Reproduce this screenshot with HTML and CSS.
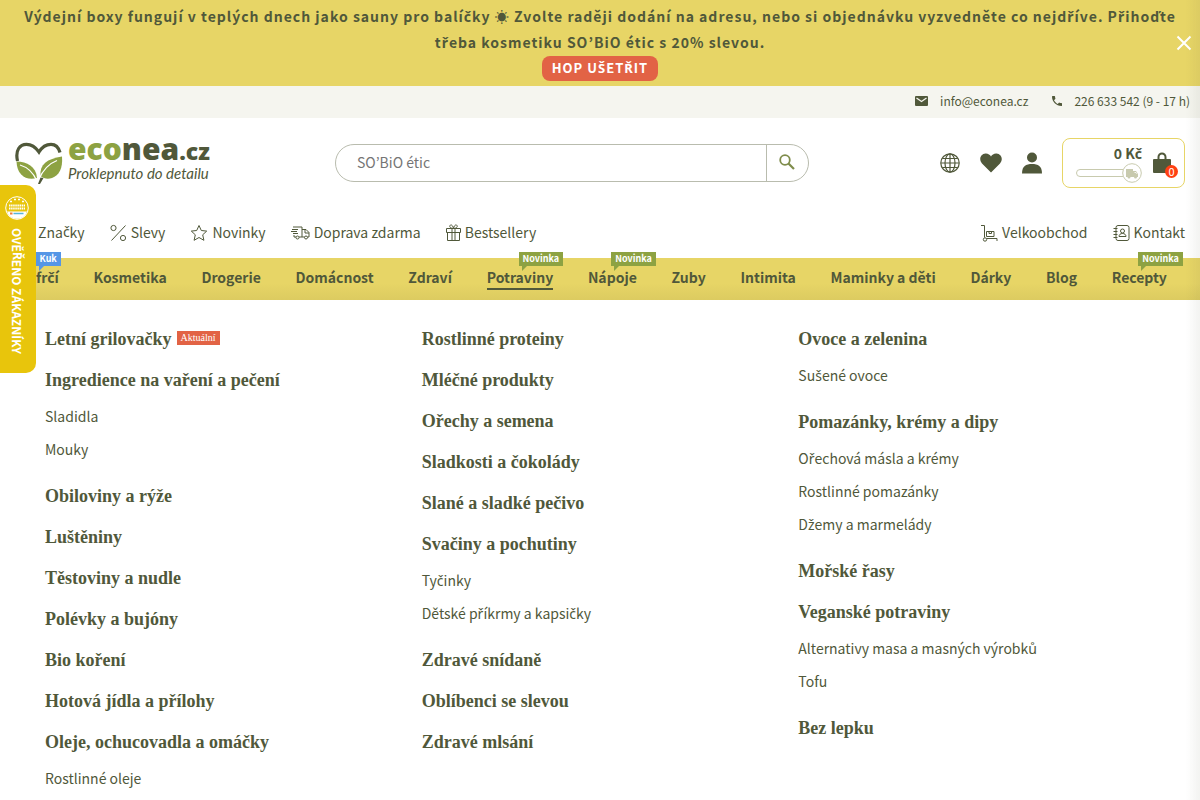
FILE: index.html
```html
<!DOCTYPE html>
<html lang="cs">
<head>
<meta charset="utf-8">
<meta name="viewport" content="width=device-width, initial-scale=1">
<title>Econea.cz – Potraviny</title>
<link rel="stylesheet" href="styles.css">
<script src="carons.js" defer></script>
</head>
<body>
<div class="promo">
  <p class="promo-text">Výdejní boxy fungují v teplých dnech jako sauny pro balíčky ☀ Zvolte raději dodání na adresu, nebo si objednávku vyzvedněte co nejdříve. Přihoďte třeba kosmetiku SO’BiO étic s 20% slevou.</p>
  <a class="promo-cta" href="#">HOP UŠETŘIT</a>
  <button class="promo-close" type="button" aria-label="Zavřít"><svg width="16" height="16" viewBox="0 0 16 16"><path d="M1.500 1.500l13 13M14.500 1.500l-13 13" stroke="#fff" stroke-width="2" fill="none"/></svg></button>
</div>
<div class="contactbar">
  <a href="#"><svg width="13" height="10" viewBox="0 0 13 10"><rect width="13" height="10" rx="1" fill="#50583a"/><path d="M1.500 2l5 3.500 5-3.500" stroke="#f5f5ef" stroke-width="1.300" fill="none"/></svg>info@econea.cz</a>
  <a href="#"><svg width="10" height="10" viewBox="3 3 18 18"><path fill="#50583a" d="M6.600 10.800c1.400 2.800 3.800 5.100 6.600 6.600l2.200-2.200c.3-.3.700-.4 1-.2 1.100.4 2.300.6 3.600.6.600 0 1 .4 1 1V20c0 .6-.4 1-1 1C10.600 21 3 13.400 3 4c0-.6.500-1 1-1h3.500c.6 0 1 .4 1 1 0 1.300.2 2.500.6 3.600.1.300 0 .7-.2 1z"/></svg>226 633 542 (9 - 17 h)</a>
</div>
<header class="header">
  <a class="logo" href="#">
    <svg width="48" height="42" viewBox="0 0 48 42">
      <path d="M2.500 19C0 8 5 2.300 11.500 2.300c5.500 0 9 2.700 12.500 7.700 3-5 7-7.700 12-7.700 4 0 7.500 2.700 9 8.200" fill="none" stroke="#50583a" stroke-width="3.200"/>
      <path d="M47 14.500c1 12-3 19-10 21.500-4.500 1.500-8.500.5-11.500-2C24.500 22 32 17 47 14.500z" fill="#8da242"/>
      <path d="M1.500 19.500C12 20 21 24 22 36 11 39 2 33 1.500 19.500z" fill="#8da242"/>
      <path d="M5 23c7 2 13 7 17 16M42 18.500c-8 3-14 9-18.500 19.500" fill="none" stroke="#fff" stroke-width="1.300"/>
      <path d="M25.500 35.500l3 .500-3.500 6h-2z" fill="#50583a"/>
    </svg>
    <span class="logo-words"><span class="logo-name"><b>eco</b>nea<small>.cz</small></span><span class="logo-claim">Proklepnuto do detailu</span></span>
  </a>
  <form class="search">
    <input type="text" placeholder="SO’BiO étic" aria-label="Hledat">
    <button type="button" aria-label="Hledat"><svg width="16" height="16" viewBox="0 0 16 16" fill="none" stroke="#7f8c4b"><circle cx="6" cy="6" r="4.800" stroke-width="1.800"/><path d="M9.500 9.500l5.500 5.500" stroke-width="2.200"/></svg></button>
  </form>
  <div class="tools">
    <a href="#" aria-label="Jazyk"><svg width="20" height="20" viewBox="0 0 20 20" fill="none" stroke="#50583a" stroke-width="1.200"><circle cx="10" cy="10" r="9.200"/><ellipse cx="10" cy="10" rx="5" ry="9.200"/><path d="M10 1v18M1 10h18M2.500 5.500h15M2.500 14.500h15"/></svg></a>
    <a href="#" aria-label="Oblíbené"><svg width="22" height="20" viewBox="0 0 22 20"><path fill="#50583a" d="M11 19.500L2 10.500C-1.500 6.500.500 1 5.500.500 8 .300 10 1.800 11 3.500 12 1.800 14 .300 16.500.500c5 .500 7 6 3.500 10z"/></svg></a>
    <a href="#" aria-label="Účet"><svg width="20" height="22" viewBox="0 0 20 22" fill="#50583a"><circle cx="10" cy="5.500" r="5"/><path d="M0 21.500C0 14 4 12 10 12s10 2 10 9.500z"/></svg></a>
    <a class="cart" href="#">
      <span class="cart-sum"><strong>0 Kč</strong>
        <svg width="66" height="20" viewBox="0 0 66 20" fill="#fff" stroke="#c8caae"><rect x=".5" y="6.500" width="58" height="7" rx="3.500"/><circle cx="56" cy="10" r="9.300"/><path fill="#c8caae" stroke="none" d="M50 6h7v2h3l2 3v3h-1a1.500 1.500 0 0 1-3 0h-3.500a1.500 1.500 0 0 1-3 0H50z"/><path stroke="#fff" d="M58.500 9.500h1.500l.8 1.300" fill="none" stroke-width=".8"/></svg></span>
      <span class="cart-bag"><svg width="18" height="22" viewBox="0 0 18 22"><path d="M5.500 9V5a3.500 3.500 0 0 1 7 0V9" fill="none" stroke="#50583a" stroke-width="2"/><rect y="7" width="18" height="14" rx="1" fill="#50583a"/></svg><span class="cart-count">0</span></span>
    </a>
  </div>
</header>
<nav class="quick">
  <a href="#">Značky</a>
  <a href="#"><svg width="17" height="18" viewBox="0 0 17 18"><circle cx="3.500" cy="4" r="2.600"/><circle cx="13" cy="14" r="2.600"/><path d="M15.500 1.500l-14 15"/></svg>Slevy</a>
  <a href="#"><svg width="18" height="18" viewBox="0 0 18 18"><path d="M9 1.500l2.300 5 5.400.6-4 3.700 1.200 5.500L9 13.500l-4.900 2.800 1.200-5.500-4-3.700 5.400-.6z"/></svg>Novinky</a>
  <a href="#"><svg width="19" height="18" viewBox="0 0 19 18"><path d="M2 3h9v10H8M5 13H3v-2M11 5.500h4l3 3V13h-1.500M13.500 13H11M14 5.500v3.500h4M1 5.500h6M0 7.500h6M2 9.500h5"/><circle cx="6.500" cy="13.500" r="1.500"/><circle cx="15" cy="13.500" r="1.500"/></svg>Doprava zdarma</a>
  <a href="#"><svg width="15" height="18" viewBox="0 0 15 18"><path d="M.5 4.500h14v4H.5zM1.500 8.500v8h12v-8M6 4.500v12M9 4.500v12M7.500 4.500C5 4.500 3 3 4 1.500s3 0 3.500 3C8 1.500 10 0 11 1.500s-1 3-3.500 3z"/></svg>Bestsellery</a>
  <a class="push" href="#"><svg width="17" height="18" viewBox="0 0 17 18"><path d="M0 1.500h3.500v12M5.500 14.500H16V17M5.500 7.500h7.500v5H5.500zM8 7.500v2h2.500v-2"/><circle cx="4" cy="15.500" r="1.700"/></svg>Velkoobchod</a>
  <a href="#"><svg width="17" height="18" viewBox="0 0 17 18"><rect x="3" y="1.500" width="13" height="15" rx="2"/><path d="M.5 4.500h4M.5 7.500h4M.5 10.500h4M.5 13.500h4M6 12.500c0-2 1.500-3 3.500-3s3.500 1 3.500 3z"/><circle cx="9.500" cy="7" r="2"/></svg>Kontakt</a>
</nav>
<nav class="mainnav">
  <a href="#">frčí<span class="flag flag-blue">Kuk</span></a>
  <a href="#">Kosmetika</a>
  <a href="#">Drogerie</a>
  <a href="#">Domácnost</a>
  <a href="#">Zdraví</a>
  <a class="active" href="#">Potraviny<span class="flag">Novinka</span></a>
  <a href="#">Nápoje<span class="flag">Novinka</span></a>
  <a href="#">Zuby</a>
  <a href="#">Intimita</a>
  <a href="#">Maminky a děti</a>
  <a href="#">Dárky</a>
  <a href="#">Blog</a>
  <a href="#">Recepty<span class="flag">Novinka</span></a>
</nav>
<main class="mega">
  <ul class="col">
    <li><a class="head" href="#">Letní grilovačky<span class="tag">Aktuální</span></a></li>
    <li><a class="head" href="#">Ingredience na vaření a pečení</a><ul class="sub"><li><a href="#">Sladidla</a></li><li><a href="#">Mouky</a></li></ul></li>
    <li><a class="head" href="#">Obiloviny a rýže</a></li>
    <li><a class="head" href="#">Luštěniny</a></li>
    <li><a class="head" href="#">Těstoviny a nudle</a></li>
    <li><a class="head" href="#">Polévky a bujóny</a></li>
    <li><a class="head" href="#">Bio koření</a></li>
    <li><a class="head" href="#">Hotová jídla a přílohy</a></li>
    <li><a class="head" href="#">Oleje, ochucovadla a omáčky</a><ul class="sub"><li><a href="#">Rostlinné oleje</a></li></ul></li>
  </ul>
  <ul class="col">
    <li><a class="head" href="#">Rostlinné proteiny</a></li>
    <li><a class="head" href="#">Mléčné produkty</a></li>
    <li><a class="head" href="#">Ořechy a semena</a></li>
    <li><a class="head" href="#">Sladkosti a čokolády</a></li>
    <li><a class="head" href="#">Slané a sladké pečivo</a></li>
    <li><a class="head" href="#">Svačiny a pochutiny</a><ul class="sub"><li><a href="#">Tyčinky</a></li><li><a href="#">Dětské příkrmy a kapsičky</a></li></ul></li>
    <li><a class="head" href="#">Zdravé snídaně</a></li>
    <li><a class="head" href="#">Oblíbenci se slevou</a></li>
    <li><a class="head" href="#">Zdravé mlsání</a></li>
  </ul>
  <ul class="col">
    <li><a class="head" href="#">Ovoce a zelenina</a><ul class="sub"><li><a href="#">Sušené ovoce</a></li></ul></li>
    <li><a class="head" href="#">Pomazánky, krémy a dipy</a><ul class="sub"><li><a href="#">Ořechová másla a krémy</a></li><li><a href="#">Rostlinné pomazánky</a></li><li><a href="#">Džemy a marmelády</a></li></ul></li>
    <li><a class="head" href="#">Mořské řasy</a></li>
    <li><a class="head" href="#">Veganské potraviny</a><ul class="sub"><li><a href="#">Alternativy masa a masných výrobků</a></li><li><a href="#">Tofu</a></li></ul></li>
    <li><a class="head" href="#">Bez lepku</a></li>
  </ul>
</main>
<aside class="verified">
  <svg width="24" height="24" viewBox="0 0 24 24"><circle cx="12" cy="12" r="11.300" fill="#e8c50c" stroke="#fff"/><path d="M2 15.500h20a10.500 10.500 0 0 1-20 0z" fill="#fff"/><path d="M4 9.500h16M4 12.500h16" stroke="#fff" stroke-width="2" stroke-dasharray="1.500 .6"/><path d="M5 5.500h2M9 3.500h2M13 3.500h2M17 5.500h2" stroke="#fff" stroke-width="1.500"/><path d="M8.500 17.500h10" stroke="#58b4d8" stroke-width="1.500"/><path d="M5 17.500h2.500" stroke="#ef7b3c" stroke-width="2"/></svg>
  <span>OVĚŘENO ZÁKAZNÍKY</span>
</aside>
</body>
</html>
```
FILE: carons.js
```js
const CARON = /([čČďĎňŇřŘšŠťŤžŽ])/;
const walker = document.createTreeWalker(document.body, NodeFilter.SHOW_TEXT);
const nodes = [];
while (walker.nextNode()) {
  const node = walker.currentNode;
  if (CARON.test(node.data) && !node.parentElement.closest(".head")) nodes.push(node);
}
for (const node of nodes) {
  const parts = node.data.split(CARON).filter(Boolean).map((part) => {
    if (!CARON.test(part)) return part;
    const span = document.createElement("span");
    span.className = "caron";
    span.textContent = part;
    return span;
  });
  node.replaceWith(...parts);
}
```
FILE: styles.css
```css
* { box-sizing: border-box; }
body {
  margin: 0;
  background: #fff;
  color: #50583a;
  font-family: "Noto Sans CJK JP", "Noto Sans", sans-serif;
  font-size: 14px;
  line-height: 24px;
  height: 100vh;
  overflow: hidden;
}
body::after {
  content: "";
  position: fixed;
  inset: 0 0 0 auto;
  width: 14px;
  background: linear-gradient(to left, rgba(80, 88, 58, .07), rgba(80, 88, 58, 0));
  pointer-events: none;
}
a { color: inherit; text-decoration: none; }
ul { list-style: none; margin: 0; padding: 0; }
button { border: 0; background: none; padding: 0; cursor: pointer; }
svg { display: block; flex: none; }
.caron { font-family: "Noto Sans", sans-serif; line-height: 1; }

.promo {
  position: relative;
  background: #e7d566;
  padding: 3px 20px 5px;
  text-align: center;
  font-weight: 700;
  letter-spacing: 1px;
}
.promo-text { margin: 0 0 1px; line-height: 26px; }
.promo-cta {
  display: block;
  width: fit-content;
  margin: 0 auto;
  padding: 0 10px 1px;
  border-radius: 8px;
  background: #e26345;
  color: #fff;
  font-size: 13px;
  font-weight: 700;
  line-height: 24px;
}
.promo-close { position: absolute; right: 8px; top: 35px; }

.contactbar {
  display: flex;
  justify-content: flex-end;
  gap: 24px;
  padding: 3px 10px 5px;
  background: #f5f5ef;
  font-size: 12px;
}
.contactbar a { display: flex; align-items: center; gap: 12px; }

.header {
  display: flex;
  align-items: center;
  padding: 20px 15px;
}
.logo { display: flex; align-items: center; gap: 5px; width: 320px; }
.logo-words { display: flex; flex-direction: column; }
.logo-name { font: 800 30px/20px "Open Sans", sans-serif; }
.logo-name b { color: #8da242; font-weight: 800; }
.logo-name small { font-size: 23px; line-height: 14px; }
.logo-claim { font: italic 15px/28px Lato, cursive; }

.search {
  display: flex;
  flex: 0 1 474px;
  height: 38px;
  border: 1px solid #b9bcae;
  border-radius: 19px;
  overflow: hidden;
}
.search input {
  flex: 1;
  min-width: 0;
  border: 0;
  background: none;
  padding: 0 21px 2px;
  font: inherit;
  color: #50583a;
}
.search input::placeholder { color: #757575; }
.search button {
  display: flex;
  align-items: center;
  justify-content: center;
  width: 42px;
  padding: 0 2px 2px 0;
  border-left: 1px solid #b9bcae;
}

.tools { display: flex; align-items: center; gap: 20px; margin-left: auto; }
.cart {
  display: flex;
  gap: 11px;
  height: 50px;
  padding: 4px 13px;
  border: 1px solid #e7d566;
  border-radius: 8px;
}
.cart-sum { display: flex; flex-direction: column; align-items: flex-end; }
.cart-sum strong { line-height: 20px; font-weight: 700; }
.cart-bag { position: relative; padding-top: 9px; }
.cart-count {
  position: absolute;
  right: -7px;
  bottom: 5px;
  width: 13px;
  height: 13px;
  border-radius: 50%;
  background: #ff4012;
  color: #fff;
  font-size: 11px;
  line-height: 12px;
  text-align: center;
}

.quick { display: flex; gap: 25px; padding: 11px 15px 13px 38px; }
.quick a { display: flex; align-items: center; line-height: 26px; }
.quick svg { margin: 2px 4px 0 0; fill: none; stroke: #50583a; stroke-width: 1; }
.quick .push { margin-left: auto; }

.mainnav {
  display: flex;
  justify-content: space-between;
  padding: 8px 33px 10px 36px;
  background: linear-gradient(#e7d566 60%, #dccb60);
  font-weight: 700;
}
.mainnav a { position: relative; line-height: 22px; border-bottom: 2px solid transparent; white-space: nowrap; }
.mainnav .active { border-color: #50583a; }
.flag {
  position: absolute;
  right: -10px;
  top: -14px;
  padding: 0 4px;
  background: #8da242;
  color: #fff;
  font-size: 9px;
  line-height: 14px;
}
.mainnav a:nth-child(7) .flag { right: -19px; }
.mainnav a:last-child .flag { right: -16px; }
.flag::after {
  content: "";
  position: absolute;
  left: 3px;
  top: 14px;
  border-top: 5px solid #8da242;
  border-right: 5px solid transparent;
}
.mainnav .flag-blue { right: -2px; background: #5596e6; }
.flag-blue::after { border-top-color: #5596e6; }

.mega {
  display: grid;
  grid-template-columns: repeat(3, 1fr);
  padding: 25px 25px 0 45px;
}
.col { display: flex; flex-direction: column; gap: 12px; }
.head {
  display: flex;
  align-items: center;
  gap: 5px;
  font: bold 18px/29px "Liberation Serif", serif;
}
.tag {
  margin-bottom: 3px;
  padding: 0 4px;
  background: #e26345;
  color: #fff;
  font-size: 10px;
  font-weight: normal;
  line-height: 14px;
}
.sub { display: flex; flex-direction: column; gap: 8px; padding: 9px 0 8px; }
.sub a { display: block; line-height: 25px; }

.verified {
  position: fixed;
  left: 0;
  top: 185px;
  display: flex;
  flex-direction: column;
  align-items: center;
  gap: 8px;
  width: 36px;
  height: 188px;
  padding: 11px 3px 0 0;
  border-radius: 0 10px 10px 0;
  background: #e8c50c;
  color: #fff;
}
.verified span { font-weight: bold; font-size: 12px; line-height: 20px; white-space: nowrap; }
.verified > span { writing-mode: vertical-rl; }
```
